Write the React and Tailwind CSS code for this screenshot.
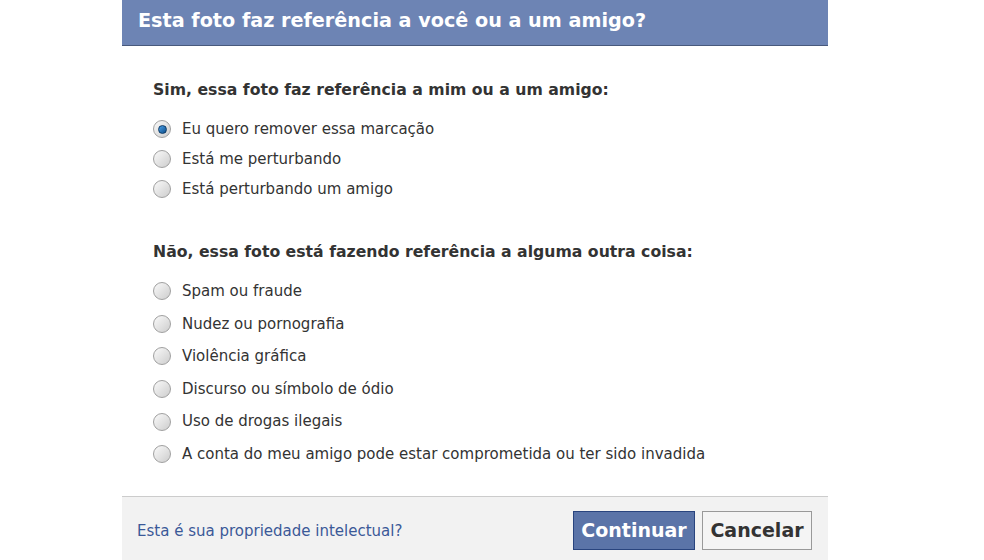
import React from 'react'

const yes = ['Eu quero remover essa marcação', 'Está me perturbando', 'Está perturbando um amigo']
const no = [
  'Spam ou fraude',
  'Nudez ou pornografia',
  'Violência gráfica',
  'Discurso ou símbolo de ódio',
  'Uso de drogas ilegais',
  'A conta do meu amigo pode estar comprometida ou ter sido invadida',
]

function Radio({ checked }) {
  return (
    <span className="relative flex h-[18px] w-[18px] shrink-0 items-center justify-center rounded-full border border-[#a0a0a0] bg-gradient-to-br from-[#fafafa] to-[#cdcdcd]">
      {checked && (
        <span className="h-[9px] w-[9px] rounded-full border border-[#0d3a66] bg-gradient-to-br from-[#4aa0e8] to-[#0b4f8c]" />
      )}
    </span>
  )
}

function Option({ label, checked, h }) {
  return (
    <label className={`flex items-center gap-[11px] ${h}`}>
      <Radio checked={checked} />
      <span className="text-[15px] text-[#333]">{label}</span>
    </label>
  )
}

export default function App() {
  return (
    <div className="h-[560px] w-[984px] overflow-hidden bg-white" style={{ fontFamily: '"DejaVu Sans", Verdana, sans-serif' }}>
      <div className="ml-[122px] flex h-[560px] w-[706px] flex-col">
        <div className="flex h-[46px] items-center border-b border-[#48597c] bg-[#6d84b4] px-[16px] pb-[2px]">
          <h1 className="text-[19.2px] font-bold text-white">Esta foto faz referência a você ou a um amigo?</h1>
        </div>

        <div className="flex-1 pl-[31px] pt-[31px]">
          <h2 className="text-[15.7px] font-bold leading-[26px] text-[#333]">Sim, essa foto faz referência a mim ou a um amigo:</h2>
          <div className="mt-[11px]">
            {yes.map((t, i) => (
              <Option key={t} label={t} checked={i === 0} h="h-[30px]" />
            ))}
          </div>

          <h2 className="mt-[35px] text-[15.7px] font-bold leading-[26px] text-[#333]">Não, essa foto está fazendo referência a alguma outra coisa:</h2>
          <div className="mt-[10px]">
            {no.map((t) => (
              <Option key={t} label={t} h="h-[32.6px]" />
            ))}
          </div>
        </div>

        <div className="flex h-[64px] items-start justify-between border-t border-[#cccccc] bg-[#f2f2f2] pl-[15px] pr-[16px] pt-[14px]">
          <a className="mt-[9px] text-[15px] text-[#3b5998]">Esta é sua propriedade intelectual?</a>
          <div className="flex gap-[7px]">
            <button className="h-[39px] w-[122px] border border-[#29447e] bg-[#5b74a8] text-[19px] font-bold text-white">Continuar</button>
            <button className="h-[39px] w-[110px] border border-[#999] bg-[#f4f4f4] text-[19px] font-bold text-[#333]">Cancelar</button>
          </div>
        </div>
      </div>
    </div>
  )
}
